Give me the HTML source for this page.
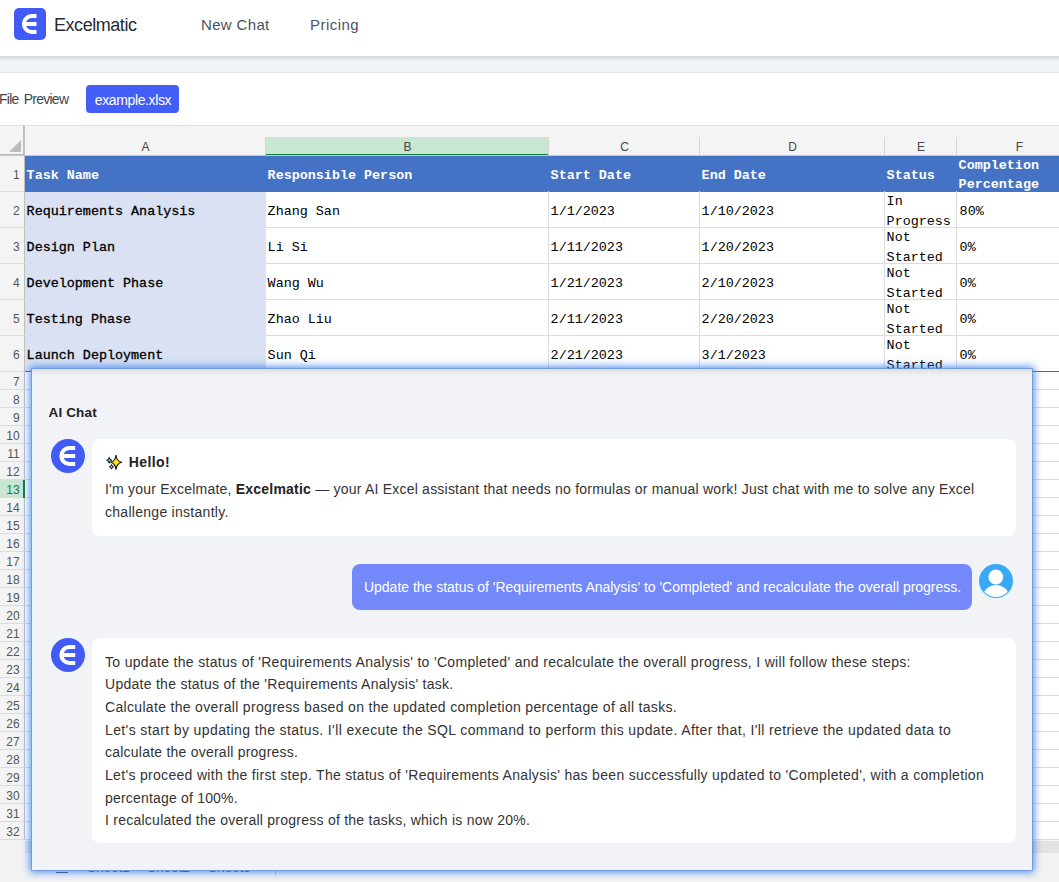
<!DOCTYPE html><html><head><meta charset="utf-8"><style>
*{margin:0;padding:0;box-sizing:border-box}
html,body{width:1059px;height:882px;overflow:hidden;background:#fff;position:relative}
body{font-family:"Liberation Sans",sans-serif;color:#333}
.a{position:absolute}
.hl{position:absolute;height:1px;background:#dcdcdc}
.vl{position:absolute;width:1px;background:#dcdcdc}
.mono{font-family:"Liberation Mono",monospace;font-size:13.4px;white-space:pre;color:#000}
.mb{font-weight:normal;-webkit-text-stroke:0.3px currentColor}
.mbh{font-weight:bold}
.rn{position:absolute;left:0;width:19.6px;text-align:right;font-size:12px;color:#555;line-height:14px}
.ch{position:absolute;text-align:center;font-size:12px;color:#444;line-height:14px;top:140px}
.t{position:absolute;white-space:nowrap;font-size:14px;color:#333;line-height:16px}
</style></head><body>
<div class="a" style="left:0;top:0;width:1059px;height:56px;background:#fff"></div>
<div class="a" style="left:14px;top:8px;width:32px;height:32px;border-radius:5px;background:#425bf7"></div>
<svg class="a" style="left:14px;top:8px" width="32" height="32" viewBox="0 0 32 32"><path d="M22.5 8 H17.8 A8 8 0 0 0 17.8 24 H22.5 M11.5 16 H22.5" fill="none" stroke="#fff" stroke-width="3.8"/></svg>
<div class="t" style="left:54px;top:15px;font-size:18px;line-height:20px;color:#262b36;letter-spacing:-0.45px">Excelmatic</div>
<div class="t" style="left:201px;top:16px;font-size:15px;line-height:18px;color:#4b5260;letter-spacing:0.34px">New Chat</div>
<div class="t" style="left:310px;top:16px;font-size:15px;line-height:18px;color:#4b5260;letter-spacing:0.45px">Pricing</div>
<div class="a" style="left:0;top:56px;width:1059px;height:17px;background:linear-gradient(#d4d5d9 0,#e5e6ea 3px,#f1f2f6 6px);border-bottom:1px solid #e3e4e8"></div>
<div class="t" style="left:-1px;top:91px;font-size:14px;color:#3f4650;letter-spacing:-0.75px;word-spacing:2px">File Preview</div>
<div class="a" style="left:86px;top:85px;width:93px;height:28px;border-radius:4px;background:#435ef6"></div>
<div class="t" style="left:86px;top:91.5px;width:93px;text-align:center;font-size:14px;color:#fff;letter-spacing:-0.38px;text-indent:1px">example.xlsx</div>
<div class="a" style="left:0;top:125px;width:1059px;height:1px;background:#e0e0e0"></div>
<div class="a" style="left:0;top:126px;width:1059px;height:30px;background:#f4f4f4"></div>
<div class="a" style="left:0;top:126px;width:24px;height:714px;background:#f4f4f4"></div>
<svg class="a" style="left:9px;top:140px" width="12" height="12" viewBox="0 0 12 12"><path d="M12 0 V12 H0 Z" fill="#bdbdbd"/></svg>
<div class="a" style="left:0;top:154px;width:25px;height:2px;background:#bdbdbd"></div>
<div class="a" style="left:23px;top:126px;width:2px;height:30px;background:#bdbdbd"></div>
<div class="a" style="left:265px;top:137px;width:284px;height:19px;background:#c8e6d2;border-bottom:2px solid #107c41"></div>
<div class="vl" style="left:265px;top:137px;height:19px;background:#d4d4d4"></div>
<div class="vl" style="left:548px;top:137px;height:19px;background:#d4d4d4"></div>
<div class="vl" style="left:699px;top:137px;height:19px;background:#d4d4d4"></div>
<div class="vl" style="left:884px;top:137px;height:19px;background:#d4d4d4"></div>
<div class="vl" style="left:956px;top:137px;height:19px;background:#d4d4d4"></div>
<div class="a" style="left:24px;top:126px;width:1px;height:714px;background:#c0c0c0"></div>
<div class="a" style="left:0;top:155px;width:1059px;height:1px;background:#c8c8c8"></div>
<div class="ch" style="left:25px;width:241px">A</div>
<div class="ch" style="left:266px;width:283px">B</div>
<div class="ch" style="left:549px;width:151px">C</div>
<div class="ch" style="left:700px;width:185px">D</div>
<div class="ch" style="left:885px;width:72px">E</div>
<div class="ch" style="left:957px;width:125px">F</div>
<div class="a" style="left:25px;top:156px;width:1034px;height:36px;background:#4472c4"></div>
<div class="hl" style="left:0;top:191px;width:24px;background:#dcdcdc"></div>
<div class="hl" style="left:0;top:227px;width:1059px;background:#dcdcdc"></div>
<div class="hl" style="left:0;top:263px;width:1059px;background:#dcdcdc"></div>
<div class="hl" style="left:0;top:299px;width:1059px;background:#dcdcdc"></div>
<div class="hl" style="left:0;top:335px;width:1059px;background:#dcdcdc"></div>
<div class="hl" style="left:0;top:371px;width:1059px;background:#dcdcdc"></div>
<div class="hl" style="left:0;top:389px;width:1059px;background:#dcdcdc"></div>
<div class="hl" style="left:0;top:407px;width:1059px;background:#dcdcdc"></div>
<div class="hl" style="left:0;top:425px;width:1059px;background:#dcdcdc"></div>
<div class="hl" style="left:0;top:443px;width:1059px;background:#dcdcdc"></div>
<div class="hl" style="left:0;top:461px;width:1059px;background:#dcdcdc"></div>
<div class="hl" style="left:0;top:479px;width:1059px;background:#dcdcdc"></div>
<div class="hl" style="left:0;top:497px;width:1059px;background:#dcdcdc"></div>
<div class="hl" style="left:0;top:515px;width:1059px;background:#dcdcdc"></div>
<div class="hl" style="left:0;top:533px;width:1059px;background:#dcdcdc"></div>
<div class="hl" style="left:0;top:551px;width:1059px;background:#dcdcdc"></div>
<div class="hl" style="left:0;top:569px;width:1059px;background:#dcdcdc"></div>
<div class="hl" style="left:0;top:587px;width:1059px;background:#dcdcdc"></div>
<div class="hl" style="left:0;top:605px;width:1059px;background:#dcdcdc"></div>
<div class="hl" style="left:0;top:623px;width:1059px;background:#dcdcdc"></div>
<div class="hl" style="left:0;top:641px;width:1059px;background:#dcdcdc"></div>
<div class="hl" style="left:0;top:659px;width:1059px;background:#dcdcdc"></div>
<div class="hl" style="left:0;top:677px;width:1059px;background:#dcdcdc"></div>
<div class="hl" style="left:0;top:695px;width:1059px;background:#dcdcdc"></div>
<div class="hl" style="left:0;top:713px;width:1059px;background:#dcdcdc"></div>
<div class="hl" style="left:0;top:731px;width:1059px;background:#dcdcdc"></div>
<div class="hl" style="left:0;top:749px;width:1059px;background:#dcdcdc"></div>
<div class="hl" style="left:0;top:767px;width:1059px;background:#dcdcdc"></div>
<div class="hl" style="left:0;top:785px;width:1059px;background:#dcdcdc"></div>
<div class="hl" style="left:0;top:803px;width:1059px;background:#dcdcdc"></div>
<div class="hl" style="left:0;top:821px;width:1059px;background:#dcdcdc"></div>
<div class="hl" style="left:0;top:839px;width:1059px;background:#dcdcdc"></div>
<div class="vl" style="left:548px;top:191px;height:180px;background:#dcdcdc"></div>
<div class="vl" style="left:699px;top:191px;height:180px;background:#dcdcdc"></div>
<div class="vl" style="left:884px;top:191px;height:180px;background:#dcdcdc"></div>
<div class="vl" style="left:956px;top:191px;height:180px;background:#dcdcdc"></div>
<div class="a" style="left:25px;top:192px;width:241px;height:179px;background:#d9e1f2"></div>
<div class="a" style="left:25px;top:371px;width:1034px;height:1px;background:#4a67a3"></div>
<div class="rn" style="top:168px">1</div>
<div class="rn" style="top:204px">2</div>
<div class="rn" style="top:240px">3</div>
<div class="rn" style="top:276px">4</div>
<div class="rn" style="top:312px">5</div>
<div class="rn" style="top:348px">6</div>
<div class="rn" style="top:374.6px">7</div>
<div class="rn" style="top:392.6px">8</div>
<div class="rn" style="top:410.6px">9</div>
<div class="rn" style="top:428.6px">10</div>
<div class="rn" style="top:446.6px">11</div>
<div class="rn" style="top:464.6px">12</div>
<div class="a" style="left:0;top:480px;width:25px;height:18px;background:#c8e6d2;border-right:2px solid #107c41"></div>
<div class="rn" style="top:482.6px;color:#107c41">13</div>
<div class="rn" style="top:500.6px">14</div>
<div class="rn" style="top:518.6px">15</div>
<div class="rn" style="top:536.6px">16</div>
<div class="rn" style="top:554.6px">17</div>
<div class="rn" style="top:572.6px">18</div>
<div class="rn" style="top:590.6px">19</div>
<div class="rn" style="top:608.6px">20</div>
<div class="rn" style="top:626.6px">21</div>
<div class="rn" style="top:644.6px">22</div>
<div class="rn" style="top:662.6px">23</div>
<div class="rn" style="top:680.6px">24</div>
<div class="rn" style="top:698.6px">25</div>
<div class="rn" style="top:716.6px">26</div>
<div class="rn" style="top:734.6px">27</div>
<div class="rn" style="top:752.6px">28</div>
<div class="rn" style="top:770.6px">29</div>
<div class="rn" style="top:788.6px">30</div>
<div class="rn" style="top:806.6px">31</div>
<div class="rn" style="top:824.6px">32</div>
<div class="a" style="left:0;top:840px;width:1059px;height:42px;background:#f3f3f3"></div>
<div class="a" style="left:25px;top:841px;width:1034px;height:12px;background:#e2e2e2"></div>
<div class="a" style="left:56px;top:862px;width:12px;height:11px;border-top:1.5px solid #44546a;border-bottom:1.5px solid #44546a"></div>
<div class="t" style="left:87px;top:859px;font-size:14px;color:#44546a;letter-spacing:-0.3px">Sheet1</div>
<div class="t" style="left:147px;top:859px;font-size:14px;color:#44546a;letter-spacing:-0.3px">Sheet2</div>
<div class="t" style="left:208px;top:859px;font-size:14px;color:#44546a;letter-spacing:-0.3px">Sheet3</div>
<div class="a" style="left:275px;top:860px;width:1px;height:16px;background:#c8c8c8"></div>
<div class="a mono mbh" style="left:26.6px;top:168.4px;line-height:15px;color:#fff">Task Name</div>
<div class="a mono mbh" style="left:267.6px;top:168.4px;line-height:15px;color:#fff">Responsible Person</div>
<div class="a mono mbh" style="left:550.6px;top:168.4px;line-height:15px;color:#fff">Start Date</div>
<div class="a mono mbh" style="left:701.6px;top:168.4px;line-height:15px;color:#fff">End Date</div>
<div class="a mono mbh" style="left:886.6px;top:168.4px;line-height:15px;color:#fff">Status</div>
<div class="a mono mbh" style="left:958.6px;top:158.4px;line-height:15px;color:#fff">Completion</div>
<div class="a mono mbh" style="left:958.6px;top:177.4px;line-height:15px;color:#fff">Percentage</div>
<div class="a mono mb" style="left:26.6px;top:204.4px;line-height:15px;color:#000">Requirements Analysis</div>
<div class="a mono" style="left:267.6px;top:204.4px;line-height:15px;color:#000">Zhang San</div>
<div class="a mono" style="left:550.6px;top:204.4px;line-height:15px;color:#000">1/1/2023</div>
<div class="a mono" style="left:701.6px;top:204.4px;line-height:15px;color:#000">1/10/2023</div>
<div class="a mono" style="left:886.6px;top:194.4px;line-height:15px;color:#000">In</div>
<div class="a mono" style="left:886.6px;top:213.9px;line-height:15px;color:#000">Progress</div>
<div class="a mono" style="left:959.6px;top:204.4px;line-height:15px;color:#000">80%</div>
<div class="a mono mb" style="left:26.6px;top:240.4px;line-height:15px;color:#000">Design Plan</div>
<div class="a mono" style="left:267.6px;top:240.4px;line-height:15px;color:#000">Li Si</div>
<div class="a mono" style="left:550.6px;top:240.4px;line-height:15px;color:#000">1/11/2023</div>
<div class="a mono" style="left:701.6px;top:240.4px;line-height:15px;color:#000">1/20/2023</div>
<div class="a mono" style="left:886.6px;top:230.4px;line-height:15px;color:#000">Not</div>
<div class="a mono" style="left:886.6px;top:249.9px;line-height:15px;color:#000">Started</div>
<div class="a mono" style="left:959.6px;top:240.4px;line-height:15px;color:#000">0%</div>
<div class="a mono mb" style="left:26.6px;top:276.4px;line-height:15px;color:#000">Development Phase</div>
<div class="a mono" style="left:267.6px;top:276.4px;line-height:15px;color:#000">Wang Wu</div>
<div class="a mono" style="left:550.6px;top:276.4px;line-height:15px;color:#000">1/21/2023</div>
<div class="a mono" style="left:701.6px;top:276.4px;line-height:15px;color:#000">2/10/2023</div>
<div class="a mono" style="left:886.6px;top:266.4px;line-height:15px;color:#000">Not</div>
<div class="a mono" style="left:886.6px;top:285.9px;line-height:15px;color:#000">Started</div>
<div class="a mono" style="left:959.6px;top:276.4px;line-height:15px;color:#000">0%</div>
<div class="a mono mb" style="left:26.6px;top:312.4px;line-height:15px;color:#000">Testing Phase</div>
<div class="a mono" style="left:267.6px;top:312.4px;line-height:15px;color:#000">Zhao Liu</div>
<div class="a mono" style="left:550.6px;top:312.4px;line-height:15px;color:#000">2/11/2023</div>
<div class="a mono" style="left:701.6px;top:312.4px;line-height:15px;color:#000">2/20/2023</div>
<div class="a mono" style="left:886.6px;top:302.4px;line-height:15px;color:#000">Not</div>
<div class="a mono" style="left:886.6px;top:321.9px;line-height:15px;color:#000">Started</div>
<div class="a mono" style="left:959.6px;top:312.4px;line-height:15px;color:#000">0%</div>
<div class="a mono mb" style="left:26.6px;top:348.4px;line-height:15px;color:#000">Launch Deployment</div>
<div class="a mono" style="left:267.6px;top:348.4px;line-height:15px;color:#000">Sun Qi</div>
<div class="a mono" style="left:550.6px;top:348.4px;line-height:15px;color:#000">2/21/2023</div>
<div class="a mono" style="left:701.6px;top:348.4px;line-height:15px;color:#000">3/1/2023</div>
<div class="a mono" style="left:886.6px;top:338.4px;line-height:15px;color:#000">Not</div>
<div class="a mono" style="left:886.6px;top:357.9px;line-height:15px;color:#000">Started</div>
<div class="a mono" style="left:959.6px;top:348.4px;line-height:15px;color:#000">0%</div>
<div class="a" style="left:32px;top:369px;width:1000px;height:501px;background:#f1f3f7;box-shadow:0 0 0 1px rgba(110,150,215,0.75),0 0 8px 2px rgba(50,125,240,0.9),inset 0 0 0 1px rgba(235,245,255,0.6)"></div>
<div class="a" style="left:32px;top:369px;width:1000px;height:7px;background:linear-gradient(rgba(0,0,0,0.085),rgba(0,0,0,0))"></div>
<div class="t" style="left:48.5px;top:404.5px;font-size:13.5px;font-weight:bold;color:#222;letter-spacing:0.15px">AI Chat</div>
<svg class="a" style="left:51px;top:439px" width="34" height="34" viewBox="0 0 34 34"><circle cx="17" cy="17" r="17" fill="#425bf7"/><path d="M24.2 9 H18.3 A8 8 0 0 0 18.3 25 H24.2 M12 17 H24.2" fill="none" stroke="#fff" stroke-width="4"/></svg>
<div class="a" style="left:92px;top:439px;width:924px;height:97px;background:#fff;border-radius:8px"></div>
<svg class="a" style="left:104px;top:453px" width="20" height="20" viewBox="0 0 20 20"><path d="M12 2 Q12.6 8.6 18 9.3 Q12.6 10.3 12 16.6 Q11.4 10.3 6.5 9.3 Q11.4 8.6 12 2Z" fill="#ffe01b" stroke="#111" stroke-width="1.1"/><path d="M5.2 4.3 Q5.6 6.9 7.8 7.3 Q5.6 7.7 5.2 10.3 Q4.8 7.7 2.6 7.3 Q4.8 6.9 5.2 4.3Z" fill="#4fb8d8" stroke="#111" stroke-width="1"/><path d="M7.5 11.5 Q7.8 13.3 9.6 13.8 Q7.8 14.3 7.5 16.2 Q7.2 14.3 5.4 13.8 Q7.2 13.3 7.5 11.5Z" fill="#e59ac4" stroke="#111" stroke-width="1"/></svg>
<div class="t" style="left:128.8px;top:454px;font-weight:bold;color:#222;letter-spacing:0.4px">Hello!</div>
<div class="t" style="left:105px;top:481.1px;letter-spacing:0.217px">I'm your Excelmate, <b style="color:#222">Excelmatic</b> — your AI Excel assistant that needs no formulas or manual work! Just chat with me to solve any Excel</div>
<div class="t" style="left:105px;top:504.1px;letter-spacing:0.279px">challenge instantly.</div>
<div class="a" style="left:352px;top:564px;width:620px;height:46px;background:#7489f9;border-radius:8px"></div>
<div class="t" style="left:364px;top:579px;color:#fff;letter-spacing:-0.02px">Update the status of 'Requirements Analysis' to 'Completed' and recalculate the overall progress.</div>
<svg class="a" style="left:979px;top:564px" width="34" height="34" viewBox="0 0 34 34"><defs><clipPath id="uc"><circle cx="17" cy="17" r="16"/></clipPath></defs><circle cx="17" cy="17" r="17" fill="#38a8f8"/><circle cx="16.8" cy="13" r="7.4" fill="#fff"/><ellipse cx="17" cy="33" rx="13" ry="12" fill="#fff" clip-path="url(#uc)"/></svg>
<svg class="a" style="left:51px;top:638px" width="34" height="34" viewBox="0 0 34 34"><circle cx="17" cy="17" r="17" fill="#425bf7"/><path d="M24.2 9 H18.3 A8 8 0 0 0 18.3 25 H24.2 M12 17 H24.2" fill="none" stroke="#fff" stroke-width="4"/></svg>
<div class="a" style="left:92px;top:638px;width:924px;height:205px;background:#fff;border-radius:8px"></div>
<div class="t" style="left:105px;top:653.5px;letter-spacing:0.317px">To update the status of 'Requirements Analysis' to 'Completed' and recalculate the overall progress, I will follow these steps:</div>
<div class="t" style="left:105px;top:676.2px;letter-spacing:0.272px">Update the status of the 'Requirements Analysis' task.</div>
<div class="t" style="left:105px;top:698.9px;letter-spacing:0.322px">Calculate the overall progress based on the updated completion percentage of all tasks.</div>
<div class="t" style="left:105px;top:721.6px;letter-spacing:0.387px">Let's start by updating the status. I'll execute the SQL command to perform this update. After that, I'll retrieve the updated data to</div>
<div class="t" style="left:105px;top:744.3px;letter-spacing:0.23px">calculate the overall progress.</div>
<div class="t" style="left:105px;top:767.0px;letter-spacing:0.313px">Let's proceed with the first step. The status of 'Requirements Analysis' has been successfully updated to 'Completed', with a completion</div>
<div class="t" style="left:105px;top:789.7px;letter-spacing:0.189px">percentage of 100%.</div>
<div class="t" style="left:105px;top:812.4px;letter-spacing:0.247px">I recalculated the overall progress of the tasks, which is now 20%.</div>
</body></html>
